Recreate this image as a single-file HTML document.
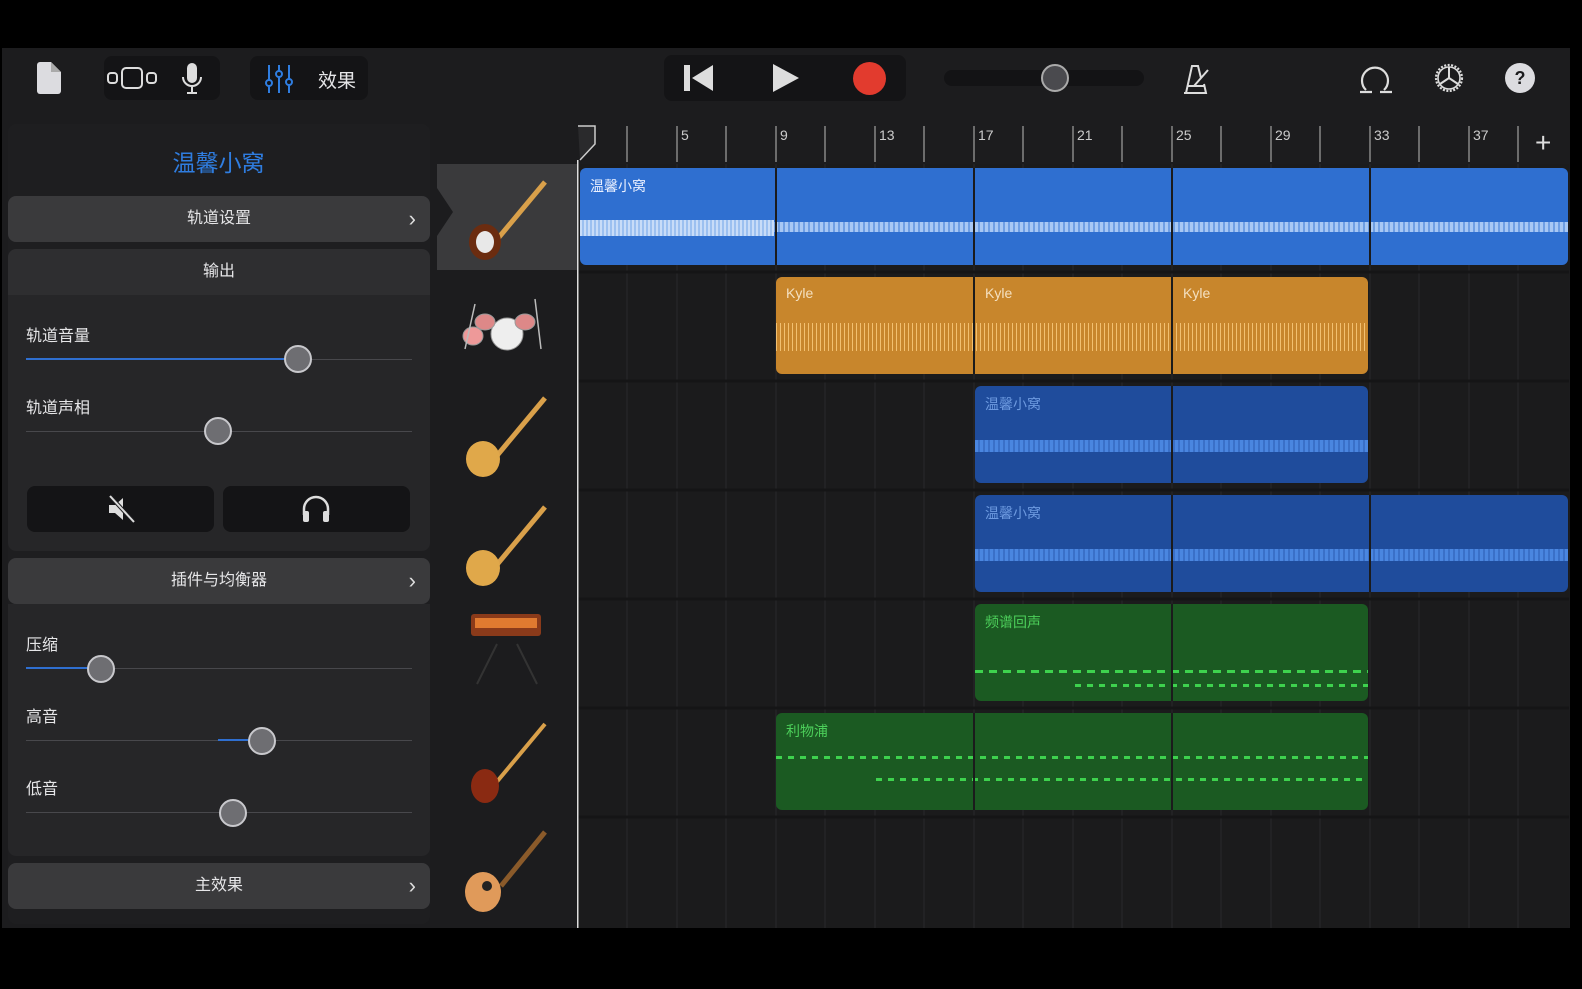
<!DOCTYPE html>
<html><head><meta charset="utf-8">
<style>
*{margin:0;padding:0;box-sizing:border-box}
body{width:1582px;height:989px;background:#000;position:relative;overflow:hidden;font-family:"Liberation Sans","Noto Sans CJK SC",sans-serif;color:#e8e8ea}
.abs{position:absolute}
#top{left:2px;top:48px;width:1568px;height:72px;background:#1c1c1e}
#main{left:2px;top:118px;width:1568px;height:810px;background:#1c1c1e}
.grp{background:#141416;border-radius:8px;position:absolute}
.row{position:absolute;left:8px;width:422px;height:46px;background:#3a3a3c;border-radius:8px;text-align:center;line-height:46px;font-size:16px;color:#e6e6e8}
.row .chev{position:absolute;right:14px;top:0;font-size:22px;color:#ddd}
.sec{position:absolute;left:8px;width:422px;background:#262628;border-radius:0 0 8px 8px}
.lbl{position:absolute;left:26px;font-size:16px;color:#e6e6e8}
.track{position:absolute;left:26px;width:386px;height:1px;background:#48484c}
.fill{position:absolute;height:2px;background:#2f6fd0}
.knob{position:absolute;width:28px;height:28px;border-radius:50%;background:#6e6e72;border:2px solid #c8c8cc}
.reg{position:absolute;border-radius:6px;overflow:hidden}
.reg span{position:absolute;left:10px;top:8px;font-size:14px}
.wave{position:absolute;left:0;right:0;height:14px;top:52px}
</style></head><body>
<div id="top" class="abs"></div>
<div id="main" class="abs"></div>

<!-- toolbar -->
<svg class="abs" style="left:36px;top:62px" width="26" height="32"><path d="M1 3a3 3 0 0 1 3-3h11l10 10v19a3 3 0 0 1-3 3H4a3 3 0 0 1-3-3z" fill="#dcdce0"/><path d="M15 0v10h10" fill="#aaa"/></svg>
<div class="grp" style="left:104px;top:56px;width:116px;height:44px"></div>
<svg class="abs" style="left:106px;top:66px" width="52" height="24"><rect x="2" y="7" width="9" height="10" rx="3" fill="none" stroke="#ddd" stroke-width="2"/><rect x="16" y="2" width="20" height="20" rx="4" fill="none" stroke="#ddd" stroke-width="2"/><rect x="41" y="7" width="9" height="10" rx="3" fill="none" stroke="#ddd" stroke-width="2"/></svg>
<svg class="abs" style="left:180px;top:62px" width="24" height="34"><rect x="7" y="1" width="10" height="20" rx="5" fill="#ddd"/><path d="M3 15a9 9 0 0 0 18 0M12 24v7M7 31h10" fill="none" stroke="#ddd" stroke-width="2"/></svg>
<div class="grp" style="left:250px;top:56px;width:118px;height:44px"></div>
<svg class="abs" style="left:264px;top:64px" width="32" height="30"><g stroke="#2f7de0" stroke-width="2"><path d="M5 1v28M15 1v28M25 1v28"/></g><g fill="#141416" stroke="#2f7de0" stroke-width="2"><circle cx="5" cy="19" r="3"/><circle cx="15" cy="10" r="3"/><circle cx="25" cy="18" r="3"/></g></svg>
<div class="abs" style="left:318px;top:66px;font-size:19px;color:#e6e6e8">效果</div>
<div class="grp" style="left:664px;top:55px;width:242px;height:46px"></div>
<svg class="abs" style="left:683px;top:64px" width="32" height="28"><rect x="1" y="1" width="6" height="26" fill="#ddd"/><path d="M30 1v26L9 14z" fill="#ddd"/></svg>
<svg class="abs" style="left:772px;top:63px" width="28" height="30"><path d="M1 1l26 14L1 29z" fill="#ddd"/></svg>
<div class="abs" style="left:853px;top:62px;width:33px;height:33px;border-radius:50%;background:#e23b2e"></div>
<div class="abs" style="left:944px;top:70px;width:200px;height:16px;border-radius:8px;background:#131315"></div>
<div class="abs" style="left:1041px;top:64px;width:28px;height:28px;border-radius:50%;background:#4a4a4e;border:2px solid #aaa"></div>
<svg class="abs" style="left:1180px;top:62px" width="32" height="34"><path d="M6 31L12 4h6l3 12M4 31h22l-2-9M8 24h16" fill="none" stroke="#ddd" stroke-width="2"/><path d="M14 24l14-16" stroke="#ddd" stroke-width="2"/></svg>
<svg class="abs" style="left:1358px;top:62px" width="36" height="34"><path d="M8 28a13 13 0 1 1 18 0" fill="none" stroke="#ddd" stroke-width="2.2"/><path d="M2 30h12M22 30h12" stroke="#ddd" stroke-width="2.2"/></svg>
<svg class="abs" style="left:1432px;top:61px" width="34" height="34"><circle cx="17" cy="17" r="13" fill="none" stroke="#ddd" stroke-width="2.2" stroke-dasharray="2 1.5"/><circle cx="17" cy="17" r="11" fill="none" stroke="#ddd" stroke-width="1.6"/><path d="M17 17L17 6M17 17l-9 6M17 17l9 6" stroke="#ddd" stroke-width="2"/></svg>
<div class="abs" style="left:1505px;top:63px;width:30px;height:30px;border-radius:50%;background:#dcdce0;color:#1c1c1e;font-weight:bold;text-align:center;line-height:30px;font-size:18px">?</div>

<!-- left panel -->
<div class="abs" style="left:8px;top:124px;width:422px;height:800px;background:#1e1e20;border-radius:8px"></div>
<div class="abs" style="left:0;width:437px;top:144px;text-align:center;font-size:23px;color:#2f7de0">温馨小窝</div>
<div class="row" style="top:196px">轨道设置<span class="chev">›</span></div>
<div class="row" style="top:249px;background:#2e2e30;border-radius:8px 8px 0 0">输出</div>
<div class="sec" style="top:295px;height:256px"></div>
<div class="lbl" style="top:322px">轨道音量</div>
<div class="track" style="top:359px"></div><div class="fill" style="left:26px;top:358px;width:272px"></div>
<div class="knob" style="left:284px;top:345px"></div>
<div class="lbl" style="top:394px">轨道声相</div>
<div class="track" style="top:431px"></div>
<div class="knob" style="left:204px;top:417px"></div>
<div class="abs" style="left:27px;top:486px;width:187px;height:46px;background:#141416;border-radius:8px"></div>
<div class="abs" style="left:223px;top:486px;width:187px;height:46px;background:#141416;border-radius:8px"></div>
<svg class="abs" style="left:106px;top:494px" width="30" height="30"><path d="M3 11h6l8-7v22l-8-7H3z" fill="#ddd"/><path d="M4 2l24 26" stroke="#1c1c1e" stroke-width="4"/><path d="M4 2l24 26" stroke="#ddd" stroke-width="2"/></svg>
<svg class="abs" style="left:300px;top:493px" width="32" height="32"><path d="M4 22v-6a12 12 0 0 1 24 0v6" fill="none" stroke="#ddd" stroke-width="2.5"/><rect x="3" y="18" width="6" height="11" rx="2" fill="#ddd"/><rect x="23" y="18" width="6" height="11" rx="2" fill="#ddd"/></svg>
<div class="row" style="top:558px">插件与均衡器<span class="chev">›</span></div>
<div class="sec" style="top:604px;height:252px"></div>
<div class="lbl" style="top:631px">压缩</div>
<div class="track" style="top:668px"></div><div class="fill" style="left:26px;top:667px;width:74px"></div>
<div class="knob" style="left:87px;top:655px"></div>
<div class="lbl" style="top:703px">高音</div>
<div class="track" style="top:740px"></div><div class="fill" style="left:218px;top:739px;width:44px"></div>
<div class="knob" style="left:248px;top:727px"></div>
<div class="lbl" style="top:775px">低音</div>
<div class="track" style="top:812px"></div>
<div class="knob" style="left:219px;top:799px"></div>
<div class="row" style="top:863px">主效果<span class="chev">›</span></div>

<!-- track headers -->
<div class="abs" style="left:437px;top:164px;width:140px;height:106px;background:#3a3a3c"></div>
<svg class="abs" style="left:437px;top:164px" width="140" height="765">
<path d="M0 24l16 24-16 24z" fill="#1c1c1e"/>
<g>
<path d="M108 18l-50 60" stroke="#d9a04a" stroke-width="5"/><ellipse cx="48" cy="78" rx="16" ry="18" fill="#6b2c10"/><ellipse cx="48" cy="78" rx="9" ry="11" fill="#e8e8e8"/>
<path d="M108 234l-50 60" stroke="#d9a04a" stroke-width="5"/><ellipse cx="46" cy="295" rx="17" ry="18" fill="#e0a84a"/>
<path d="M108 343l-50 60" stroke="#d9a04a" stroke-width="5"/><ellipse cx="46" cy="404" rx="17" ry="18" fill="#e0a84a"/>
<path d="M108 560l-50 60" stroke="#d9a04a" stroke-width="4"/><ellipse cx="48" cy="622" rx="14" ry="17" fill="#8a2a12"/>
<path d="M108 668l-44 54" stroke="#8a5a2a" stroke-width="5"/><ellipse cx="46" cy="728" rx="18" ry="20" fill="#e09a5a"/><circle cx="50" cy="722" r="5" fill="#222"/>
<rect x="34" y="450" width="70" height="22" rx="3" fill="#8a3a1a"/><rect x="38" y="454" width="62" height="10" fill="#e07a30"/><path d="M60 480l-20 40M80 480l20 40" stroke="#333" stroke-width="2"/>
<g fill="#ddd" stroke="#999"><ellipse cx="70" cy="170" rx="16" ry="16" fill="#eee"/><ellipse cx="48" cy="158" rx="10" ry="8" fill="#d88"/><ellipse cx="88" cy="158" rx="10" ry="8" fill="#d88"/><ellipse cx="36" cy="172" rx="10" ry="9" fill="#e99"/></g>
<path d="M28 185l10-45M104 185l-6-50" stroke="#bbb" stroke-width="1.5"/>
</g></svg>

<!-- timeline -->
<div class="abs" style="left:577px;top:122px;width:992px;height:806px;background:#1b1b1c"></div>
<svg class="abs" style="left:577px;top:122px" width="992" height="806">
<g stroke="#2a2a2c" stroke-width="1">
<path d="M50 42v764M100 42v764M149 42v764M199 42v764M248 42v764M298 42v764M347 42v764M397 42v764M446 42v764M496 42v764M545 42v764M595 42v764M644 42v764M694 42v764M743 42v764M793 42v764M842 42v764M892 42v764M941 42v764"/>
</g>
<g stroke="#151516" stroke-width="3"><path d="M0 150h992M0 259h992M0 368h992M0 477h992M0 586h992M0 695h992"/></g>
<rect x="0" y="0" width="992" height="42" fill="#1c1c1e"/>
<g stroke="#bbb" stroke-width="1"><path d="M50 4v36M100 4v36M149 4v36M199 4v36M248 4v36M298 4v36M347 4v36M397 4v36M446 4v36M496 4v36M545 4v36M595 4v36M644 4v36M694 4v36M743 4v36M793 4v36M842 4v36M892 4v36M941 4v36"/></g>
<g fill="#ccc" font-size="14" font-family="Liberation Sans"><text x="104" y="18">5</text><text x="203" y="18">9</text><text x="302" y="18">13</text><text x="401" y="18">17</text><text x="500" y="18">21</text><text x="599" y="18">25</text><text x="698" y="18">29</text><text x="797" y="18">33</text><text x="896" y="18">37</text><text x="6" y="18">1</text></g>
<path d="M1 4h17v18L3 38" fill="#2a2a2c" stroke="#ccc" stroke-width="1.5"/>
<rect x="0" y="38" width="1.5" height="768" fill="#ddd"/>
<text x="958" y="30" fill="#ddd" font-size="28" font-family="Liberation Sans">+</text>
</svg>

<!-- regions -->
<div class="reg" style="left:580px;top:168px;width:988px;height:97px;background:#2f6fd0"><span style="color:#eaf0ff">温馨小窝</span>
<div class="wave" style="top:54px;height:10px;background:repeating-linear-gradient(90deg,#a8c8f4 0 3px,#6f9fe4 3px 5px)"></div></div>
<div class="abs" style="left:580px;top:220px;width:194px;height:16px;background:repeating-linear-gradient(90deg,#c8dcf8 0 2px,#9cc0f0 2px 4px)"></div>
<div class="abs" style="left:775px;top:168px;width:2px;height:97px;background:#1b1b1c"></div>
<div class="abs" style="left:973px;top:168px;width:2px;height:97px;background:#1b1b1c"></div>
<div class="abs" style="left:1171px;top:168px;width:2px;height:97px;background:#1b1b1c"></div>
<div class="abs" style="left:1369px;top:168px;width:2px;height:97px;background:#1b1b1c"></div>

<div class="reg" style="left:776px;top:277px;width:592px;height:97px;background:#c8862c"><span style="color:#f4e0c0">Kyle</span>
<div class="wave" style="top:46px;height:28px;background:repeating-linear-gradient(90deg,#f2c070 0 1px,transparent 1px 4px)"></div></div>
<div class="abs" style="left:973px;top:277px;width:2px;height:97px;background:#1b1b1c"></div>
<div class="abs" style="left:1171px;top:277px;width:2px;height:97px;background:#1b1b1c"></div>
<div class="abs" style="left:985px;top:285px;font-size:14px;color:#f4e0c0">Kyle</div>
<div class="abs" style="left:1183px;top:285px;font-size:14px;color:#f4e0c0">Kyle</div>

<div class="reg" style="left:975px;top:386px;width:393px;height:97px;background:#1f4c9c"><span style="color:#6d9ae0">温馨小窝</span>
<div class="wave" style="top:54px;height:12px;background:repeating-linear-gradient(90deg,#4a86e0 0 3px,#3a70c8 3px 5px)"></div></div>
<div class="abs" style="left:1171px;top:386px;width:2px;height:97px;background:#1b1b1c"></div>
<div class="reg" style="left:975px;top:495px;width:593px;height:97px;background:#1f4c9c"><span style="color:#6d9ae0">温馨小窝</span>
<div class="wave" style="top:54px;height:12px;background:repeating-linear-gradient(90deg,#4a86e0 0 3px,#3a70c8 3px 5px)"></div></div>
<div class="abs" style="left:1171px;top:495px;width:2px;height:97px;background:#1b1b1c"></div>
<div class="abs" style="left:1369px;top:495px;width:2px;height:97px;background:#1b1b1c"></div>

<div class="reg" style="left:975px;top:604px;width:393px;height:97px;background:#1b5a22"><span style="color:#4ccf5a">频谱回声</span>
<div class="wave" style="top:66px;height:3px;background:repeating-linear-gradient(90deg,#3ed24e 0 8px,transparent 8px 14px)"></div>
<div class="wave" style="top:80px;height:3px;left:100px;background:repeating-linear-gradient(90deg,#3ed24e 0 6px,transparent 6px 12px)"></div></div>
<div class="abs" style="left:1171px;top:604px;width:2px;height:97px;background:#1b1b1c"></div>
<div class="reg" style="left:776px;top:713px;width:592px;height:97px;background:#1b5a22"><span style="color:#4ccf5a">利物浦</span>
<div class="wave" style="top:43px;height:3px;background:repeating-linear-gradient(90deg,#3ed24e 0 6px,transparent 6px 12px)"></div>
<div class="wave" style="top:65px;height:3px;left:100px;background:repeating-linear-gradient(90deg,#3ed24e 0 6px,transparent 6px 12px)"></div></div>
<div class="abs" style="left:973px;top:713px;width:2px;height:97px;background:#1b1b1c"></div>
<div class="abs" style="left:1171px;top:713px;width:2px;height:97px;background:#1b1b1c"></div>
</body></html>
